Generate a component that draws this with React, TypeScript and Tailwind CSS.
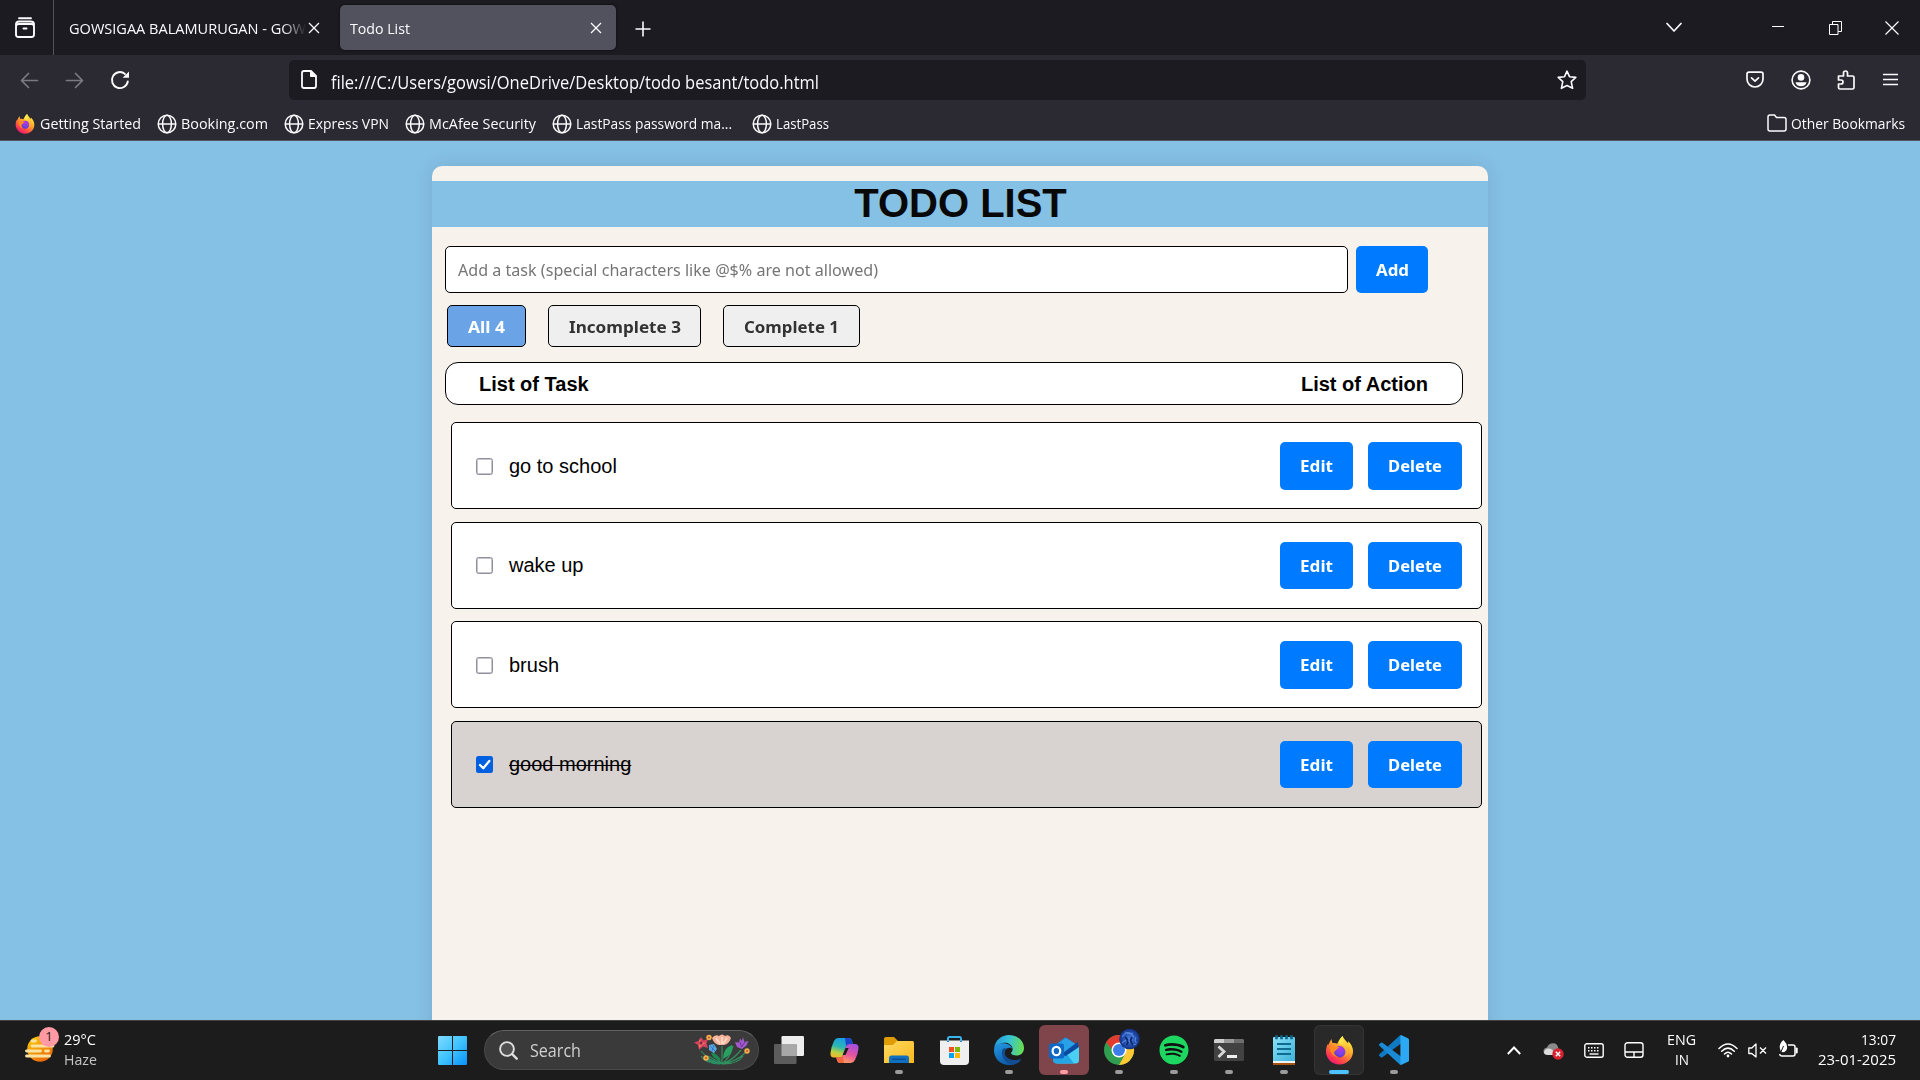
import { useLayoutEffect, useRef, useState } from "react";
import type { ReactNode } from "react";
import { FaSpotify } from "react-icons/fa";

/* Single-line label whose glyphs are squeezed or stretched to fill the width given by its class. */
function Fit({ className = "", children }: { className?: string; children: ReactNode }) {
  const outer = useRef<HTMLSpanElement>(null);
  const inner = useRef<HTMLSpanElement>(null);
  const [scale, setScale] = useState(1);
  useLayoutEffect(() => {
    if (outer.current && inner.current && inner.current.offsetWidth) {
      const r = document.createRange();
      r.selectNodeContents(inner.current);
      setScale(outer.current.clientWidth / r.getBoundingClientRect().width);
    }
  }, []);
  return (
    <span ref={outer} className={`block shrink-0 whitespace-nowrap text-left ${className}`}>
      <span ref={inner} className="inline-block origin-left" style={{ transform: `scaleX(${scale})` }}>
        {children}
      </span>
    </span>
  );
}

const Globe = () => (
  <svg className="size-5 shrink-0" viewBox="0 0 20 20" fill="none" stroke="#fbfbfe" strokeWidth="1.5">
    <circle cx="10" cy="10" r="8.8" />
    <ellipse cx="10" cy="10" rx="4.4" ry="8.8" />
    <path d="M1.2 10h17.6" />
  </svg>
);

const Firefox = ({ className }: { className: string }) => (
  <svg className={className} viewBox="0 0 30 30">
    <defs>
      <linearGradient id="ffBody" x1="0.85" y1="0.05" x2="0.25" y2="1">
        <stop offset="0" stopColor="#fff44f" />
        <stop offset="0.35" stopColor="#ffb52a" />
        <stop offset="0.6" stopColor="#ff7139" />
        <stop offset="0.85" stopColor="#ff2f55" />
        <stop offset="1" stopColor="#e31587" />
      </linearGradient>
      <radialGradient id="ffCore" cx="0.6" cy="0.25" r="0.8">
        <stop offset="0" stopColor="#b833e1" />
        <stop offset="0.6" stopColor="#7542e5" />
        <stop offset="1" stopColor="#5b2bc0" />
      </radialGradient>
      <linearGradient id="ffTail" x1="0.3" y1="0" x2="0.8" y2="1">
        <stop offset="0" stopColor="#fff44f" />
        <stop offset="1" stopColor="#ff9a2b" />
      </linearGradient>
    </defs>
    <path d="M18.2 0c1 3 3.600 4.600 5.600 7.600.3-.8.200-1.600 0-2.500C27.500 8.600 29.200 12.500 29 16.400 28.700 23.800 22.700 29.500 15 29.500S1.200 23.700 1 16.200C.9 12.400 2.200 9.200 3.400 7.800c0 .8.1 1.300.3 1.700C4.200 7.300 5.300 4.800 6.800 3c0 1.500.4 3.300 1.200 4.300 1.700-.3 3.400 0 4.600.7C13.600 5.800 15.500 2.600 18.200 0z" fill="url(#ffBody)" />
    <circle cx="15" cy="16.300" r="6" fill="url(#ffCore)" />
    <path d="M18.200 0c-2.700 2.600-4.400 5.600-3.800 8.600 3 .2 5.300 1.300 6.700 3.600 1.900 3.300.9 7.300-1.500 9.400 5-1.500 6.200-6 5-9.400-.7-2.100-2.200-3-3.800-5C19.500 5.400 18.500 2.500 18.200 0z" fill="url(#ffTail)" />
    <path d="M5 11.200c1.800-1.300 4.300-1.100 5.700-.2 1.200.4 2.900.3 4.100.5-.4 1.400-2 1.800-3 2.600-.9.700-.9 1.700-2.100 2-.7 3 1.700 5.300 4.600 5.100-4.700 1.500-9.300-3-9.300-10z" fill="#ff8a1c" />
  </svg>
);

const bookmarks = [
  { text: "Booking.com", width: "w-[87px]", box: "ml-4 w-[112px]" },
  { text: "Express VPN", width: "w-[81px]", box: "ml-[15px] w-[106px]" },
  { text: "McAfee Security", width: "w-[107px]", box: "ml-[15px] w-[132px]" },
  { text: "LastPass password ma...", width: "w-[156px]", box: "ml-[15px] w-[181px]" },
  { text: "LastPass", width: "w-[53px]", box: "ml-[19px] w-[78px]" },
];

function Browser() {
  return (
    <header className="font-['Open_Sans',sans-serif] text-[#fbfbfe]">
      <div className="flex h-[55px] items-center bg-[#1c1b22]">
        <div className="flex h-full w-[54px] items-center border-r border-[#55545c] pl-[14px] pt-px">
          <svg className="size-[22px]" viewBox="0 0 22 22" fill="none" stroke="#fbfbfe" strokeWidth="1.9" strokeLinecap="round">
            <rect x="2" y="7" width="18" height="13" rx="2.500" />
            <path d="M2 7.500Q2 4.500 5 4.500H17Q20 4.500 20 7.500M5 1.200H17M9.500 11.500h3" />
          </svg>
        </div>
        <div className="flex w-[286px] items-center pl-[15px]">
          <div className="w-[237px] pt-[2px] text-[15px] [mask-image:linear-gradient(to_right,#000_90%,transparent)]">
            <Fit className="w-[237px]">GOWSIGAA BALAMURUGAN - GOW</Fit>
          </div>
          <svg className="ml-[2px] size-[12px]" viewBox="0 0 12 12" stroke="#fbfbfe" strokeWidth="1.300"><path d="M1 1l10 10M11 1L1 11" /></svg>
        </div>
        <div className="flex h-[45px] w-[276px] items-center justify-between rounded-[5px] bg-[#52525e] pl-[10px] pr-[14px] shadow-[0_0_3px_rgba(0,0,0,0.7)]">
          <Fit className="w-[60px] pt-[2px] text-[15px]">Todo List</Fit>
          <svg className="size-[12px]" viewBox="0 0 12 12" stroke="#fbfbfe" strokeWidth="1.300"><path d="M1 1l10 10M11 1L1 11" /></svg>
        </div>
        <svg className="ml-[19px] mt-[3px] size-4" viewBox="0 0 16 16" stroke="#fbfbfe" strokeWidth="1.600"><path d="M8 .5v15M.5 8h15" /></svg>
        <div className="ml-auto flex items-center">
          <svg className="mr-[90px] h-[11px] w-4" viewBox="0 0 16 11" fill="none" stroke="#fbfbfe" strokeWidth="1.700" strokeLinecap="round" strokeLinejoin="round"><path d="M1 1.500l7 7.500 7-7.500" /></svg>
          <svg className="mr-[45px] h-3 w-3" viewBox="0 0 12 12" stroke="#fff"><path d="M0 4.500h12" /></svg>
          <svg className="mr-[43px] h-[14px] w-[13px]" viewBox="0 0 13 14" fill="none" stroke="#fff"><path d="M.5 3.500h8.500v10H.5zM3.500 3.500V.5h9v10H9" /></svg>
          <svg className="mr-[21px] size-[14px]" viewBox="0 0 14 14" stroke="#fff" strokeWidth="1.200"><path d="M.5 .5l13 13M13.500 .5l-13 13" /></svg>
        </div>
      </div>

      <div className="flex h-[50px] items-center bg-[#2b2a33]">
        <svg className="ml-5 size-[19px]" viewBox="0 0 19 19" fill="none" stroke="#7b7a82" strokeWidth="1.700" strokeLinecap="round" strokeLinejoin="round"><path d="M17.500 9.500h-16M8.500 2.500l-7 7 7 7" /></svg>
        <svg className="ml-[26px] size-[19px]" viewBox="0 0 19 19" fill="none" stroke="#7b7a82" strokeWidth="1.700" strokeLinecap="round" strokeLinejoin="round"><path d="M1.500 9.500h16M10.500 2.500l7 7-7 7" /></svg>
        <svg className="ml-[26px] size-5" viewBox="0 0 20 20" fill="none" stroke="#fbfbfe" strokeWidth="1.900" strokeLinecap="round">
          <path d="M17.800 11.500A8 8 0 1 1 15 3.900" />
          <path d="M19 1.500v6.200h-6.300z" fill="#fbfbfe" stroke="none" />
        </svg>
        <div className="ml-[159px] flex h-10 w-[1297px] items-center rounded-[5px] bg-[#1c1b22] pl-3 pr-[9px]">
          <svg className="h-[19px] w-4 -translate-y-px" viewBox="0 0 16 19" fill="none" stroke="#fbfbfe" strokeWidth="1.800" strokeLinejoin="round">
            <path d="M3 1h7l5 5v10q0 2-2 2H3q-2 0-2-2V3q0-2 2-2z" />
            <path d="M9.500 1v5.500H15z" fill="#fbfbfe" strokeWidth="1" />
          </svg>
          <Fit className="ml-[14px] w-[488px] pt-1 text-[17.500px] leading-6">file:///C:/Users/gowsi/OneDrive/Desktop/todo besant/todo.html</Fit>
          <svg className="ml-auto size-5" viewBox="0 0 20 20" fill="none" stroke="#fbfbfe" strokeWidth="1.600" strokeLinejoin="round"><path d="M10 1.200l2.500 5.500 6.300.7-4.600 4.200 1.400 6.700L10 15.500l-5.600 2.800 1.400-6.700L1.200 7.400l6.300-.7z" /></svg>
        </div>
        <svg className="ml-[160px] size-[18px]" viewBox="0 0 18 18" fill="none" stroke="#fbfbfe" strokeWidth="1.700" strokeLinecap="round" strokeLinejoin="round">
          <path d="M3 1.200h12q2 0 2 2V8A8 8 0 0 1 1 8V3.200q0-2 2-2z" /><path d="M5.500 6.800L9 10.200l3.500-3.400" />
        </svg>
        <svg className="ml-[27px] size-5" viewBox="0 0 20 20" fill="none" stroke="#fbfbfe" strokeWidth="1.600">
          <circle cx="10" cy="10" r="8.900" /><circle cx="10" cy="7.400" r="3.300" fill="#fbfbfe" stroke="none" /><path d="M4.500 12.300h11q-.8 4-5.500 4t-5.500-4z" fill="#fbfbfe" stroke="none" />
        </svg>
        <svg className="ml-[25px] size-5" viewBox="0 0 20 20" fill="none" stroke="#fbfbfe" strokeWidth="1.700" strokeLinejoin="round">
          <path d="M2.500 6H7.500V3q0-2 2-2t2 2v3h5q1.500 0 1.500 1.500v10q0 1.500-1.500 1.500H4q-1.500 0-1.500-1.500V14H5q2 0 2-2t-2-2H2.500z" />
        </svg>
        <svg className="ml-[27px] h-4 w-[15px]" viewBox="0 0 15 16" stroke="#fbfbfe" strokeWidth="1.500"><path d="M0 2.500h15M0 7.500h15M0 12.500h15" /></svg>
      </div>

      <div className="flex h-9 items-center border-b border-[#55535f] bg-[#2b2a33] pb-0 pt-[2px] text-[15px]">
        <div className="ml-[15px] flex w-[126px] items-center gap-[5px]">
          <Firefox className="size-5 shrink-0" />
          <Fit className="w-[101px]">Getting Started</Fit>
        </div>
        {bookmarks.map((b) => (
          <div key={b.text} className={`flex items-center gap-[4px] ${b.box}`}>
            <Globe />
            <Fit className={b.width}>{b.text}</Fit>
          </div>
        ))}
        <div className="ml-auto mr-[15px] flex items-center gap-[4px]">
          <svg className="h-[18px] w-5 -translate-y-px" viewBox="0 0 20 18" fill="none" stroke="#fbfbfe" strokeWidth="1.500" strokeLinejoin="round"><path d="M3 1h4.500l2 2.500H17q2 0 2 2V15q0 2-2 2H3q-2 0-2-2V3q0-2 2-2z" /></svg>
          <Fit className="w-[114px]">Other Bookmarks</Fit>
        </div>
      </div>
    </header>
  );
}

const tasks = [
  { text: "go to school", done: false, gap: "", btn: "h-12", label: "", box: "mt-px" },
  { text: "wake up", done: false, gap: "mt-[13px]", btn: "h-[47px]", label: "pb-[2px]", box: "" },
  { text: "brush", done: false, gap: "mt-3", btn: "h-12", label: "", box: "mt-px" },
  { text: "good morning", done: true, gap: "mt-[13px]", btn: "h-[47px]", label: "pb-[2px]", box: "" },
];

function Todo() {
  return (
    <main className="h-[879px] overflow-hidden bg-[#85c0e5] pt-[25px] font-['Liberation_Sans',sans-serif]">
      <section className="mx-auto h-[900px] w-[1056px] rounded-t-[10px] bg-[#f7f2eb] pt-[15px] shadow-[0_0_20px_rgba(0,0,0,0.1)]">
        <h1 className="h-[46px] bg-[#85c0e5] pl-px text-center text-[40px] font-bold leading-[45px] text-[#080808]">TODO LIST</h1>
        <div className="ml-[13px] mt-[19px] flex gap-2 font-['Noto_Sans',sans-serif] text-[16.670px]">
          <div className="flex h-[47px] w-[903px] items-center rounded-[5px] border border-black bg-white pl-3 text-[#757575]">
            <Fit className="w-[420px]">Add a task (special characters like @$% are not allowed)</Fit>
          </div>
          <button className="flex h-[47px] w-[72px] items-center justify-center rounded-[5px] bg-[#007bff] font-bold text-white"><Fit className="w-[33px]">Add</Fit></button>
        </div>
        <div className="ml-[15px] mt-3 flex gap-[22px] font-['Noto_Sans',sans-serif] text-[16.670px] font-bold text-[#333]">
          <button className="flex h-[42px] w-[79px] items-center justify-center rounded-[5px] border border-black bg-[#6aa3e6] text-white"><Fit className="w-[37px]">All 4</Fit></button>
          <button className="flex h-[42px] w-[153px] items-center justify-center rounded-[5px] border border-black bg-[#efefef]"><Fit className="w-[112px]">Incomplete 3</Fit></button>
          <button className="flex h-[42px] w-[137px] items-center justify-center rounded-[5px] border border-black bg-[#efefef]"><Fit className="w-[95px]">Complete 1</Fit></button>
        </div>
        <div className="ml-[13px] mt-[15px] flex h-[43px] w-[1018px] items-center justify-between rounded-[13px] border border-black bg-white pl-[33px] pr-[34px] text-[20px] font-bold text-black">
          <span>List of Task</span>
          <span>List of Action</span>
        </div>
        <ul className="ml-[19px] mt-[17px] w-[1031px]">
          {tasks.map((t) => (
            <li key={t.text} className={`flex h-[87px] items-center rounded-[5px] border border-black pl-6 pr-[19px] text-[20px] text-black ${t.gap} ${t.done ? "bg-[#d8d2d1]" : "bg-white"}`}>
              {t.done ? (
                <svg className="size-[17px]" viewBox="0 0 17 17"><rect width="17" height="17" rx="2.500" fill="#0060df" /><path d="M4 9l3.300 3.300L13.300 5" fill="none" stroke="#fff" strokeWidth="2.300" strokeLinecap="round" strokeLinejoin="round" /></svg>
              ) : (
                <span className={`size-[17px] rounded-[2.500px] border-[1.500px] border-[#8f8f9d] bg-white shadow-[inset_0_0_0_0.500px_#8f8f9d] ${t.box}`} />
              )}
              <span className={`ml-4 ${t.label} ${t.done ? "line-through decoration-1" : ""}`}>{t.text}</span>
              <div className="ml-auto flex gap-[15px] font-['Noto_Sans',sans-serif] text-[16.670px] font-bold text-white">
                <button className={`flex w-[73px] items-center justify-center rounded-[5px] bg-[#007bff] ${t.btn}`}><Fit className="w-[33px]">Edit</Fit></button>
                <button className={`flex w-[94px] items-center justify-center rounded-[5px] bg-[#007bff] ${t.btn}`}><Fit className="w-[54px]">Delete</Fit></button>
              </div>
            </li>
          ))}
        </ul>
      </section>
    </main>
  );
}

const Flowers = () => (
  <svg className="ml-auto h-8 w-14" viewBox="0 0 56 32" fill="none">
    <g stroke="#2f8f5e" strokeWidth="1.200">
      <path d="M28 30Q15 27 7 17M28 30Q18 24 14 22M28 30Q38 27 47 16M28 30Q42 28 51 19M28 30V12M28 30Q20 22 18 15M28 30Q36 24 39 12M26 30Q12 30 7 22M30 30Q44 30 49 22" />
    </g>
    <path d="M29 25Q29 14 38 11Q40 20 29 25z" fill="#27a060" />
    <path d="M27 27Q24 19 17 19Q19 25 27 27z" fill="#1d8a54" />
    <path d="M27 30Q18 24 9 25Q16 30 27 30z" fill="#2b8c66" />
    <path d="M7 3l2.500 3.500L14 5l-1.500 4.500L14 14l-5-1.500L5 16l-1-5-4-2.500L4.500 7z" fill="#d8415f" />
    <path d="M5 5l3 3 4 1-4 2-3 3V9z" fill="#ef7a55" />
    <circle cx="7" cy="9" r="1.700" fill="#8f2452" />
    <path d="M15 11l5-1 3 5-3 4-5-3z" fill="#5aa7e0" /><path d="M16 12l5 5M20 11l-2 6" stroke="#2a6fc0" strokeWidth=".8" />
    <path d="M18 4Q21 0 25 2Q28-1 31 2Q35 0 37 4Q35 10 30 11H25Q20 10 18 4z" fill="#f6b39a" />
    <path d="M22 4l4 6M33 4l-4 6M28 3v7" stroke="#fbdccb" strokeWidth="1.600" />
    <path d="M49 3l1.500 5 4-1-2 4.500-4.500 3.500-5-2-2-5 4 .5 1-4 2 2.500z" fill="#a05bc8" /><path d="M46 8l1.500 5L51 8" stroke="#6f35a5" />
    <g fill="#f4ae4d"><circle cx="15" cy="3.500" r="2.700" /><circle cx="12" cy="24" r="2.700" /><circle cx="53" cy="17" r="2.700" /></g>
    <g fill="#b85a22"><circle cx="15" cy="3.500" r="1" /><circle cx="12" cy="24" r="1" /><circle cx="53" cy="17" r="1" /></g>
  </svg>
);

const TaskView = () => (
  <svg className="h-7 w-[30px]" viewBox="0 0 30 28">
    <rect x="7.500" width="22.500" height="20" rx="1.200" fill="#ededed" />
    <rect y="8" width="22.500" height="20" rx="1.200" fill="#5c5c5c" />
    <path d="M7.500 8h15v12h-15z" fill="#a8a8a8" />
  </svg>
);

const Copilot = () => (
  <svg className="h-[27px] w-[29px]" viewBox="0 0 29 27">
    <defs>
      <linearGradient id="cpA" x1="0.5" y1="0" x2="0.2" y2="1"><stop offset="0" stopColor="#1c9be8" /><stop offset="0.45" stopColor="#2ab7b0" /><stop offset="0.75" stopColor="#bfd13e" /><stop offset="1" stopColor="#f5b62e" /></linearGradient>
      <linearGradient id="cpB" x1="0.7" y1="0" x2="0.3" y2="1"><stop offset="0" stopColor="#a64fe0" /><stop offset="0.5" stopColor="#e554a0" /><stop offset="1" stopColor="#ffa15e" /></linearGradient>
    </defs>
    <path d="M8 1h11q2 0 2.700 2l1.500 5h-4q-2.500 0-3.300 2.600L13 18q-.9 2.500-3.500 2.500H4q-4 0-3.500-4.500Q1 10 4 4 5.500 1 8 1z" fill="url(#cpA)" />
    <path d="M15 .9h3.800q2.200 0 2.900 2.100l1.500 5h-4q-2 0-3 2z" fill="#1d45c9" />
    <path d="M21 26H10q-2 0-2.700-2l-1-3.600h3.500q2.300 0 3.100-2.600L16 9.500Q17 7 19.500 7H25q4 0 3.500 4.500Q28 17 25 23q-1.500 3-4 3z" fill="url(#cpB)" />
    <path d="M14 26h-4q-2 0-2.700-2l-1-3.600h3.500q2 0 3-2z" fill="#f4663f" />
    <path d="M15.500 11h3.200L15.500 18h-2.800z" fill="#1d1d1d" />
  </svg>
);

const Explorer = () => (
  <svg className="h-7 w-[30px]" viewBox="0 0 30 28">
    <defs><linearGradient id="exA" x1="0" y1="0" x2="1" y2="1"><stop offset="0" stopColor="#ffda63" /><stop offset="1" stopColor="#f9b81b" /></linearGradient></defs>
    <path d="M0 3q0-2 2-2h8l4 4v6H0z" fill="#e09c06" />
    <path d="M0 9h9l4-4h15.500Q30 5 30 7v20H0z" fill="url(#exA)" />
    <path d="M5 27v-5q0-2.500 2.500-2.500h15q2.500 0 2.500 2.500v5z" fill="#0f6fc0" />
    <path d="M9 23.200h12" stroke="#0a4f92" strokeWidth="1.600" strokeLinecap="round" />
  </svg>
);

const Store = () => (
  <svg className="size-[29px]" viewBox="0 0 29 29">
    <path d="M8 6V2.500Q8 1 9.500 1h10Q21 1 21 2.500V6" fill="none" stroke="#38b4ec" strokeWidth="2" />
    <path d="M0 4.500h29V25q0 4-4 4H4q-4 0-4-4z" fill="#efefef" />
    <path d="M7 4.500h2v1.500H7zM20 4.500h2v1.500h-2z" fill="#1c8dd0" />
    <path d="M9 11h5v5H9z" fill="#f25022" /><path d="M15 11h5v5h-5z" fill="#7fba00" /><path d="M9 17h5v5H9z" fill="#00a4ef" /><path d="M15 17h5v5h-5z" fill="#ffb900" />
  </svg>
);

const Edge = () => (
  <svg className="size-[30px]" viewBox="0 0 30 30">
    <defs>
      <linearGradient id="egA" x1="0" y1="0.3" x2="1" y2="0.4"><stop offset="0" stopColor="#2299e0" /><stop offset="0.5" stopColor="#36c3d5" /><stop offset="1" stopColor="#6ade4f" /></linearGradient>
      <linearGradient id="egB" x1="0.2" y1="0" x2="0.6" y2="1"><stop offset="0" stopColor="#2195df" /><stop offset="1" stopColor="#0d58a6" /></linearGradient>
    </defs>
    <path d="M0 14C1 5 7.500 0 15 0c9 0 15 6 15 13 0 5-3.500 7.500-7.500 7.500-4 0-6-1.500-5.300-3C18 16.500 19 15.500 18.500 13 17.500 9 13 7 8.500 8 4 9 1 11 0 14z" fill="url(#egA)" />
    <path d="M0 14C2 9.500 6 8 10 8.300c4.500.3 8 3 8.500 5.700-2-2.200-7-1.500-8 3-.8 4.500 3 8.500 7.500 9.500 3 .8 6.500.3 9-1.500C24.500 28.200 20.500 30 15 30 6 30-.7 23 0 14z" fill="url(#egB)" />
    <path d="M8.500 14.500C6.500 20 10 28 18 29.600c4.500-.8 7.800-3.300 9.500-6-8 3.400-15.500.7-16.800-5-.5-2 .3-4 1.800-5-1.500-.6-3 0-4 .9z" fill="#134d91" />
  </svg>
);

const Outlook = () => (
  <svg className="h-[27px] w-[30px]" viewBox="0 0 30 27">
    <path d="M5 9L15.500 0.800q1-.7 2 0L28 8v9H5z" fill="#1784d8" />
    <path d="M17 1l11 7-12 8-9-8z" fill="#2aa1e6" />
    <path d="M30 9v14q0 3.500-3.500 3.500h-18Q5 26.500 4 23z" fill="#48d0f5" />
    <path d="M4 20l12-5.500L25 26.500H8q-4 0-4-3.500z" fill="#24a5e4" />
    <path d="M14 16L28.500 5l1.500 5-14 9.500z" fill="#0a4aa0" />
    <rect y="6.500" width="15" height="15" rx="1.800" fill="#0d69c8" />
    <ellipse cx="7.400" cy="14" rx="3.800" ry="4.200" fill="none" stroke="#fff" strokeWidth="2.200" />
  </svg>
);

const Chrome = () => (
  <svg className="h-9 w-9 -translate-y-[3px] translate-x-[3px]" viewBox="0 0 36 36">
    <defs><radialGradient id="chA"><stop offset="0" stopColor="#4a80e0" /><stop offset="0.600" stopColor="#2450b4" /><stop offset="1" stopColor="#12307c" /></radialGradient></defs>
    <circle cx="15" cy="21" r="15" fill="#2f9e4f" />
    <path d="M28 13.500A15 15 0 0 1 15 36l6.500-11.500L15 13.500z" fill="#fcc934" />
    <path d="M2 13.500A15 15 0 0 1 28 13.500H15L9 21z" fill="#e33b2e" />
    <circle cx="15" cy="21" r="7.500" fill="#fff" /><circle cx="15" cy="21" r="6" fill="#3c7de8" />
    <circle cx="25.500" cy="10" r="10.300" fill="url(#chA)" />
    <path d="M18 8q4-6 8-4l4 4M18 14q5-5 8-1t6 2M21 3q4 3 8 1M32 8q-2 5 1 6" fill="none" stroke="#6a9bf0" strokeWidth="1.100" opacity="0.700" />
    <path d="M21 8q4 3 2 8M28 8q-3 4 1 8" fill="none" stroke="#0f2a6b" strokeWidth="1.800" />
  </svg>
);

const Terminal = () => (
  <svg className="h-[22px] w-[30px]" viewBox="0 0 30 22">
    <rect width="30" height="22" rx="1.500" fill="#424242" /><path d="M1.500 0H10v4H0V1.500Q0 0 1.500 0z" fill="#cfcfcf" /><path d="M10 0h10v4H10z" fill="#9a9a9a" /><path d="M20 0h8.500Q30 0 30 1.500V4H20z" fill="#6e6e6e" />
    <path d="M4.500 7.500l5.500 5-5.500 5.500" fill="none" stroke="#d8d8d8" strokeWidth="2.800" /><path d="M13 16h10v3H13z" fill="#efefef" />
  </svg>
);

const Notepad = () => (
  <svg className="h-[30px] w-[22px]" viewBox="0 0 22 30">
    <defs><linearGradient id="npA" x1="0" y1="0" x2="1" y2="1"><stop offset="0" stopColor="#8ae2f8" /><stop offset="1" stopColor="#3cb2d8" /></linearGradient></defs>
    <path d="M0 26h22v4H0z" fill="#a4520f" /><path d="M0 25.500h22V28H0z" fill="#f2f2f2" /><path d="M0 3q0-1 1-1h20q1 0 1 1v23H0z" fill="url(#npA)" />
    <path d="M3.500 .3v4M8.500 .3v4M13.500 .3v4M18.500 .3v4" stroke="#0d6588" strokeWidth="2.600" />
    <path d="M4 9h14M4 14h14M4 19h14" stroke="#0f6c90" strokeWidth="1.800" />
  </svg>
);

const VsCode = () => (
  <svg className="size-[30px]" viewBox="0 0 30 30">
    <path d="M22 0v8.500L3.500 22.300q-.8.600-1.600 0L.4 21q-.8-.8 0-1.700L20.500.8Q21.200 0 22 0z" fill="#0f79c4" />
    <path d="M22 30v-8.500L3.500 7.700q-.8-.6-1.600 0L.4 9q-.8.8 0 1.700l20.100 18.500q.7.800 1.500.8z" fill="#1a8ad6" />
    <path d="M22 0l7 3.200q1 .5 1 1.600v20.400q0 1.100-1 1.600L22 30q-.6-.6-.6-1.600V1.600Q21.400.6 22 0z" fill="#2da8f2" />
  </svg>
);

const apps: { name: string; icon: ReactNode; cell: string; dot: string }[] = [
  { name: "taskview", icon: <TaskView />, cell: "", dot: "" },
  { name: "copilot", icon: <Copilot />, cell: "", dot: "" },
  { name: "explorer", icon: <Explorer />, cell: "", dot: "w-2 bg-[#9b9b9b]" },
  { name: "store", icon: <Store />, cell: "", dot: "" },
  { name: "edge", icon: <Edge />, cell: "", dot: "w-2 bg-[#9b9b9b]" },
  { name: "outlook", icon: <Outlook />, cell: "bg-[#80454a]", dot: "w-2 bg-[#ff99a4]" },
  { name: "chrome", icon: <Chrome />, cell: "", dot: "w-2 bg-[#9b9b9b]" },
  { name: "spotify", icon: <span className="flex size-[29px] items-center justify-center rounded-full bg-[#111]"><FaSpotify className="size-[30px] shrink-0 text-[#1ed760]" /></span>, cell: "", dot: "w-2 bg-[#9b9b9b]" },
  { name: "terminal", icon: <Terminal />, cell: "", dot: "w-2 bg-[#9b9b9b]" },
  { name: "notepad", icon: <Notepad />, cell: "", dot: "w-2 bg-[#9b9b9b]" },
  { name: "firefox", icon: <Firefox className="size-[29px]" />, cell: "bg-[#292929] shadow-[inset_0_0_0_1px_#343434]", dot: "w-5 bg-[#4cc2ff]" },
  { name: "vscode", icon: <VsCode />, cell: "", dot: "w-2 bg-[#9b9b9b]" },
];

function Taskbar() {
  return (
    <footer className="flex h-[60px] items-center border-t border-[#424242] bg-[#1c1c1c] pb-px font-['Open_Sans',sans-serif] text-[15px] text-white">
      <div className="flex w-[438px] items-center pl-6">
        <div className="relative size-[36px]">
          <svg className="size-[36px]" viewBox="0 0 36 36">
            <defs><linearGradient id="wxA" x1="0" y1="0" x2="0.600" y2="1"><stop offset="0" stopColor="#ffd400" /><stop offset="1" stopColor="#ea6a0a" /></linearGradient></defs>
            <circle cx="16" cy="17" r="12.800" fill="url(#wxA)" />
            <path d="M8 9h3.500M8 14h21M2.500 19h14M21.500 19h3M2.500 24h23" stroke="#f8e3a4" strokeWidth="2.800" strokeLinecap="round" />
          </svg>
          <span className="absolute -top-[5px] left-[15px] flex size-5 items-center justify-center rounded-full bg-[#ff99a4] text-[13px] text-[#222]">1</span>
        </div>
        <div className="ml-1 flex flex-col pb-[3px] leading-5">
          <Fit className="w-8">29°C</Fit>
          <Fit className="w-[33px] text-[#c5c5c5]">Haze</Fit>
        </div>
      </div>
      <svg className="size-[29px]" viewBox="0 0 29 29">
        <defs><linearGradient id="winA" gradientUnits="userSpaceOnUse" x1="0" y1="0" x2="29" y2="29"><stop offset="0" stopColor="#80daff" /><stop offset="0.500" stopColor="#3fc3fd" /><stop offset="1" stopColor="#0a92fa" /></linearGradient></defs>
        <path d="M1 0h13v14H0V1q0-1 1-1zM15 0h13q1 0 1 1v13H15zM0 15h14v14H1q-1 0-1-1zM15 15h14v13q0 1-1 1H15z" fill="url(#winA)" />
      </svg>
      <div className="ml-[17px] flex h-10 w-[275px] items-center rounded-full border border-[#4a4a4a] border-t-[#636363] bg-[#3a3a3a] pl-[14px] pr-[8px]">
        <svg className="size-[19px]" viewBox="0 0 19 19" fill="none" stroke="#dedede" strokeLinecap="round"><circle cx="8" cy="8" r="6.900" fill="#505050" strokeWidth="1.900" /><path d="M13.200 13.200l4.500 4.500" strokeWidth="2.400" /></svg>
        <Fit className="ml-3 w-[51px] text-[17.500px] leading-6 text-[#d0d0d0]">Search</Fit>
        <Flowers />
      </div>
      <div className="ml-[5px] flex gap-[5px]">
        {apps.map((a) => (
          <div key={a.name} className={`relative flex size-[50px] items-center justify-center rounded-[6px] ${a.cell}`}>
            {a.icon}
            <span className={`absolute bottom-px left-1/2 h-1 -translate-x-1/2 rounded-full ${a.dot}`} />
          </div>
        ))}
      </div>
      <div className="ml-auto mr-6 flex items-center">
        <svg className="h-[9px] w-[14px]" viewBox="0 0 14 9" fill="none" stroke="#fff" strokeWidth="1.900"><path d="M.8 8l6.200-6.500L13.200 8" /></svg>
        <svg className="ml-[22px] mt-[2px] h-[18px] w-[21px]" viewBox="0 0 21 18">
          <path d="M5 13q-4.500 0-4.500-3.800 0-3 3.500-3.700Q6 1 10.500 1.300 14 1.500 15 5l1 4-6 4z" fill="#8a8a8a" /><path d="M1 11q0-4 4-4.500 3-.3 5 2l1 4.500H5Q2 13 1 11z" fill="#dcdcdc" />
          <circle cx="15" cy="12" r="5.700" fill="#d92231" /><path d="M12.800 9.800l4.400 4.400M17.200 9.800l-4.400 4.400" stroke="#fff" strokeWidth="1.400" />
        </svg>
        <svg className="ml-5 h-[15px] w-5" viewBox="0 0 20 15" fill="none" stroke="#fff" strokeWidth="1.400"><rect x=".8" y=".8" width="18.400" height="13.400" rx="2" /><path d="M4 4.700h12M4 7.700h12" strokeDasharray="1.500 1.500" /><path d="M5.500 11h9" /></svg>
        <svg className="ml-5 h-4 w-5" viewBox="0 0 20 16" fill="none" stroke="#fff" strokeWidth="1.400"><rect x="1" y=".8" width="18" height="14.400" rx="2.500" /><path d="M1 10h18M10 10v5" /></svg>
        <div className="ml-[23px] flex flex-col items-center pb-[2px] leading-5">
          <Fit className="w-[29px]">ENG</Fit>
          <Fit className="w-[14px]">IN</Fit>
        </div>
        <svg className="ml-[22px] h-[15px] w-5" viewBox="0 0 20 15" fill="none" stroke="#fff" strokeWidth="1.500" strokeLinecap="round"><path d="M1 5.500Q10-3.500 19 5.500M3.700 8.300Q10 2 16.300 8.300M6.500 11Q10 7.500 13.500 11" /><circle cx="10" cy="13" r="1.400" fill="#fff" stroke="none" /></svg>
        <svg className="ml-[10px] h-[15px] w-[19px]" viewBox="0 0 19 15" fill="none" stroke="#fff" strokeWidth="1.300" strokeLinejoin="round"><path d="M.8 5h3L8 1v13L3.800 10.500h-3zM12 4.500l6 6M18 4.500l-6 6" /></svg>
        <svg className="ml-[11px] h-[18px] w-5 -translate-y-px" viewBox="0 0 20 18" fill="none" stroke="#fff" strokeWidth="1.500">
          <path d="M10 5h5q2 0 2 2v7q0 2-2 2H4q-2 0-2.300-2" /><path d="M18.700 8.500v4" strokeWidth="2" strokeLinecap="round" /><path d="M5.500 0q5 5 3 10-2.500 3.500-5.500 1.500Q-.5 5 5.500 0z" fill="#fff" stroke="none" /><path d="M5.500 6L2 14" stroke="#1c1c1c" strokeWidth="1" />
        </svg>
        <div className="ml-5 flex flex-col items-end pb-[3px] leading-5">
          <Fit className="w-[35px]">13:07</Fit>
          <Fit className="w-[78px]">23-01-2025</Fit>
        </div>
      </div>
    </footer>
  );
}

export default function App() {
  return (
    <div className="flex h-[1080px] w-[1920px] flex-col overflow-hidden">
      <Browser />
      <Todo />
      <Taskbar />
    </div>
  );
}
